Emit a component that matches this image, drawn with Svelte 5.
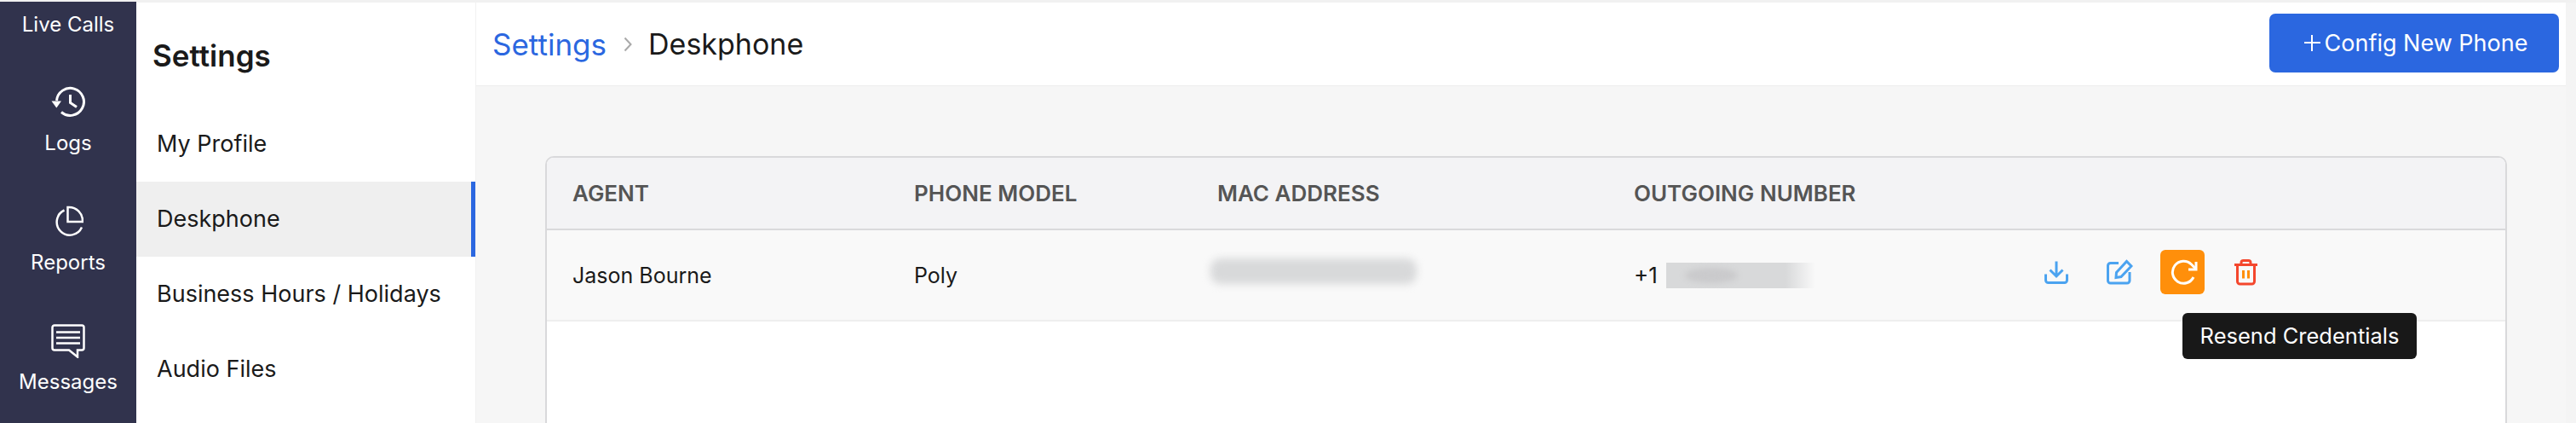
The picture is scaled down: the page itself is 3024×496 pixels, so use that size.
<script>
	const railItems = [
		{ label: 'Logs', icon: 'logs' },
		{ label: 'Reports', icon: 'reports' },
		{ label: 'Messages', icon: 'messages' }
	];
	const navItems = ['My Profile', 'Deskphone', 'Business Hours / Holidays', 'Audio Files'];
	let active = 'Deskphone';
</script>

<div class="page">
	<aside class="rail">
		<div class="rail-first">Live Calls</div>
		{#each railItems as item}
			<div class="rail-item">
				{#if item.icon === 'logs'}
					<svg width="40" height="36" viewBox="0 0 40 36" fill="none" stroke="#fff" stroke-width="3">
						<path d="M6.5 16A16 16 0 1 1 12 29.500" />
						<path d="M0.500 16.500H12L6.300 24.500Z" fill="#fff" stroke="none" />
						<path d="M22.500 9V18.500L30 23.500" />
					</svg>
				{:else if item.icon === 'reports'}
					<svg width="36" height="38" viewBox="0 0 36 38" fill="none" stroke="#fff" stroke-width="2.500">
						<path d="M13.500 5.500A15.300 15.300 0 1 0 34 25.500" />
						<path d="M17.500 2H19A16 16 0 0 1 35 18V19H17.500Z" />
					</svg>
				{:else}
					<svg width="40" height="40" viewBox="0 0 40 40" fill="none" stroke="#fff" stroke-width="2.500">
						<path d="M4 1.500H36A2.500 2.500 0 0 1 38.500 4V28A2.500 2.500 0 0 1 36 30.500H31V38.500L21 30.500H4A2.500 2.500 0 0 1 1.500 28V4A2.500 2.500 0 0 1 4 1.500Z" />
						<path d="M6 9.500H34M6 16H34M6 22.500H34" />
					</svg>
				{/if}
				<span>{item.label}</span>
			</div>
		{/each}
	</aside>

	<nav class="subnav">
		<h2>Settings</h2>
		<ul>
			{#each navItems as item}
				<li class:active={item === active}>{item}</li>
			{/each}
		</ul>
	</nav>

	<main class="main">
		<header class="topbar">
			<div class="crumbs">
				<span class="crumb-link">Settings</span>
				<svg class="crumb-sep" width="10" height="18" viewBox="0 0 10 18" fill="none" stroke="#a9a9a9" stroke-width="2">
					<path d="M1.500 1.500L8.500 9L1.500 16.500" />
				</svg>
				<span class="crumb-current">Deskphone</span>
			</div>
			<button class="new-phone"><span class="plus"></span>Config New Phone</button>
		</header>

		<section class="content">
			<div class="card">
				<div class="row head">
					<div>AGENT</div>
					<div>PHONE MODEL</div>
					<div>MAC ADDRESS</div>
					<div>OUTGOING NUMBER</div>
					<div></div>
				</div>
				<div class="row body-row">
					<div>Jason Bourne</div>
					<div>Poly</div>
					<div><div class="mac-blur"></div></div>
					<div class="number">
						<span>+1</span>
						<div class="num-blur"><div class="num-spot"></div></div>
					</div>
					<div class="actions">
						<button class="action">
							<svg width="28" height="27" viewBox="0 0 28 27" fill="none" stroke="#4ba3f0" stroke-width="3">
								<path d="M14 0.500V17M6.500 10.500L14 18L21.500 10.500" />
								<path d="M1.500 15.500V22.500A3 3 0 0 0 4.500 25.500H23.500A3 3 0 0 0 26.500 22.500V15.500" />
							</svg>
						</button>
						<button class="action">
							<svg width="31" height="30" viewBox="0 0 31 30" fill="none" stroke="#4ba3f0" stroke-width="3">
								<path d="M14 4.500H4.500A3 3 0 0 0 1.500 7.500V25A3 3 0 0 0 4.500 28H24A3 3 0 0 0 27 25V15" />
								<path d="M11.500 15.500L23.500 2.500L29 8L17 20.500L11 21.500Z" />
							</svg>
						</button>
						<button class="action hot">
							<svg class="refresh" width="32" height="30" viewBox="0 0 32 30" fill="none" stroke="#fff" stroke-width="3">
								<path d="M27 21A13 13 0 1 1 24.500 6L29.500 11" />
								<path d="M30 3V12H21" />
							</svg>
							<div class="tooltip">Resend Credentials</div>
						</button>
						<button class="action">
							<svg width="27" height="31" viewBox="0 0 27 31" fill="none" stroke="#f4472d" stroke-width="3">
								<path d="M0 6.500H27" />
								<path d="M8 6V4A2.500 2.500 0 0 1 10.500 1.500H16.500A2.500 2.500 0 0 1 19 4V6" />
								<path d="M3.500 7V26A3 3 0 0 0 6.500 29H20.500A3 3 0 0 0 23.500 26V7" />
								<path d="M10.500 13V22.500M16.500 13V22.500" stroke="#ff8f0b" />
							</svg>
						</button>
					</div>
				</div>
			</div>
		</section>
	</main>
	<div class="gutter"></div>
</div>

<style>
	:global(body) {
		margin: 0;
		background: #fff;
		overflow: hidden;
	}

	.page {
		display: flex;
		height: 496px;
		padding-top: 3px;
		box-sizing: border-box;
		background: #f1f1f1;
		font-family: Inter, 'Liberation Sans', sans-serif;
		color: #1a1a1a;
		overflow: hidden;
	}

	.rail {
		width: 160px;
		flex: none;
		margin-top: -1px;
		background: #31334d;
		color: #fff;
		font-size: 24px;
		text-align: center;
	}

	.rail-first {
		height: 98px;
		padding-top: 13px;
		box-sizing: border-box;
		line-height: 28px;
	}

	.rail-item {
		height: 140px;
		box-sizing: border-box;
		display: flex;
		flex-direction: column;
		align-items: center;
	}

	.rail-item svg {
		height: 40px;
		margin-bottom: 14px;
	}

	.rail-item span {
		line-height: 28px;
	}

	.subnav {
		width: 398px;
		flex: none;
		background: #fff;
	}

	.subnav h2 {
		margin: 0;
		height: 122px;
		padding: 42px 0 0 19px;
		box-sizing: border-box;
		font-size: 35px;
		line-height: 40px;
		font-weight: 600;
	}

	.subnav ul {
		list-style: none;
		margin: 0;
		padding: 0;
	}

	.subnav li {
		height: 88px;
		box-sizing: border-box;
		padding-left: 24px;
		font-size: 27px;
		line-height: 88px;
	}

	.subnav li.active {
		background: #efefef;
		border-right: 5px solid #2b67e0;
	}

	.main {
		flex: 1;
		min-width: 0;
		margin-left: 1px;
		display: flex;
		flex-direction: column;
	}

	.topbar {
		height: 98px;
		flex: none;
		box-sizing: border-box;
		display: flex;
		align-items: center;
		justify-content: space-between;
		padding: 0 8px 0 19px;
		background: #fff;
		border-bottom: 1px solid #eeeeee;
	}

	.crumbs {
		display: flex;
		align-items: center;
	}

	.crumb-link {
		font-size: 35px;
		color: #2b67e0;
	}

	.crumb-sep {
		margin: 0 19px 0 20px;
	}

	.crumb-current {
		font-size: 34px;
		color: #1a1a1a;
	}

	.new-phone {
		width: 340px;
		height: 69px;
		margin-top: -3px;
		padding: 0 0 0 4px;
		border: 0;
		border-radius: 7px;
		background: #2b67e0;
		color: #fff;
		font: inherit;
		font-size: 27px;
		display: flex;
		align-items: center;
		justify-content: center;
		gap: 5px;
	}

	.plus {
		width: 19px;
		height: 19px;
		background:
			linear-gradient(#fff, #fff) center / 100% 2px no-repeat,
			linear-gradient(#fff, #fff) center / 2px 100% no-repeat;
	}

	.content {
		flex: 1;
		padding: 82px 69px 0 81px;
		background: #f6f6f6;
	}

	.card {
		height: 400px;
		box-sizing: border-box;
		border: 2px solid #d9d9db;
		border-radius: 10px 10px 0 0;
		background: #fff;
	}

	.row {
		display: grid;
		grid-template-columns: 401px 356px 489px 470px 1fr;
		padding-left: 30px;
		align-items: center;
		box-sizing: border-box;
	}

	.head {
		height: 85px;
		background: #f3f3f5;
		border-bottom: 2px solid #d9d9db;
		border-radius: 8px 8px 0 0;
		font-size: 26px;
		font-weight: 600;
		color: #555;
	}

	.body-row {
		height: 107px;
		background: #f9f9f9;
		border-bottom: 2px solid #eeeeee;
		font-size: 25px;
	}

	.mac-blur {
		width: 242px;
		height: 30px;
		margin: -9px 0 0 -8px;
		background: #d8d9da;
		border-radius: 12px;
		filter: blur(5px);
	}

	.number {
		display: flex;
		align-items: center;
		gap: 10px;
	}

	.number span {
		font-size: 26px;
	}

	.num-blur {
		position: relative;
		width: 175px;
		height: 30px;
		background: linear-gradient(90deg, #d8d9da 80%, #f9f9f9);
	}

	.num-spot {
		position: absolute;
		left: 22px;
		top: 6px;
		width: 62px;
		height: 18px;
		border-radius: 50%;
		background: #cacacc;
		filter: blur(3px);
	}

	.actions {
		display: flex;
		gap: 22px;
		margin-top: -7px;
	}

	.action {
		position: relative;
		width: 52px;
		height: 52px;
		padding: 0;
		border: 0;
		border-radius: 6px;
		background: transparent;
		display: flex;
		align-items: center;
		justify-content: center;
	}

	.action.hot {
		background: #ff8f0b;
	}

	.refresh {
		margin-left: 3px;
	}

	.tooltip {
		position: absolute;
		top: 74px;
		left: 26px;
		width: 275px;
		height: 54px;
		border-radius: 6px;
		background: #181818;
		color: #fff;
		font-family: Inter, 'Liberation Sans', sans-serif;
		font-size: 25.500px;
		line-height: 54px;
		text-align: center;
		white-space: nowrap;
	}

	.gutter {
		width: 12px;
		flex: none;
		background: #f4f4f4;
	}
</style>
